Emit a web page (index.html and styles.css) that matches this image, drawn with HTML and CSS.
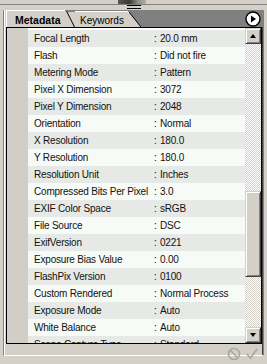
FILE: index.html
```html
<!DOCTYPE html>
<html lang="en">
<head>
    <meta charset="UTF-8">
    <title>Metadata</title>
    <link rel="stylesheet" href="styles.css">
</head>
<body>
    <div class="window">
        <div class="top-strip">
            <div class="top-edge">
                <div class="thumb-peek"></div>
            </div>
            <div class="grip"></div>
        </div>
        <div class="frame">
            <div class="tabs">
                <div class="tab active">Metadata</div>
                <svg class="tab-slant" width="10" height="17" viewBox="0 0 10 17">
                    <rect x="0" y="0" width="10" height="17" fill="#808080"/>
                    <polygon points="0,2 10,2 10,17 0,17" fill="#d4d0c8"/>
                    <polygon points="0,1 2,1 10,17 0,17" fill="#d4d0c8"/>
                    <line x1="1.5" y1="1" x2="9.5" y2="17" stroke="#000" stroke-width="1"/>
                </svg>
                <div class="tab">Keywords</div>
                <svg class="tab-slant" width="13" height="17" viewBox="0 0 13 17">
                    <rect x="0" y="0" width="13" height="17" fill="#808080"/>
                    <polygon points="0,2 1,2 13,17 0,17" fill="#d4d0c8"/>
                    <line x1="1" y1="2" x2="13" y2="17" stroke="#000" stroke-width="1"/>
                    <line x1="0" y1="2.5" x2="1" y2="2.5" stroke="#fff" stroke-width="1"/>
                </svg>
                <div class="tab-fill"></div>
                <svg class="menu-btn" width="16" height="16" viewBox="0 0 16 16">
                    <circle cx="8" cy="8" r="7" fill="#fff" stroke="#000" stroke-width="1.4"/>
                    <polygon points="6,4.5 11,8 6,11.5" fill="#000"/>
                </svg>
            </div>
            <div class="content">
                <div class="gutter"></div>
                <div class="rows">
                    <div class="row"><span class="label">Focal Length</span><span class="colon">:</span><span>20.0 mm</span></div>
                    <div class="row"><span class="label">Flash</span><span class="colon">:</span><span>Did not fire</span></div>
                    <div class="row"><span class="label">Metering Mode</span><span class="colon">:</span><span>Pattern</span></div>
                    <div class="row"><span class="label">Pixel X Dimension</span><span class="colon">:</span><span>3072</span></div>
                    <div class="row"><span class="label">Pixel Y Dimension</span><span class="colon">:</span><span>2048</span></div>
                    <div class="row"><span class="label">Orientation</span><span class="colon">:</span><span>Normal</span></div>
                    <div class="row"><span class="label">X Resolution</span><span class="colon">:</span><span>180.0</span></div>
                    <div class="row"><span class="label">Y Resolution</span><span class="colon">:</span><span>180.0</span></div>
                    <div class="row"><span class="label">Resolution Unit</span><span class="colon">:</span><span>Inches</span></div>
                    <div class="row"><span class="label">Compressed Bits Per Pixel</span><span class="colon">:</span><span>3.0</span></div>
                    <div class="row"><span class="label">EXIF Color Space</span><span class="colon">:</span><span>sRGB</span></div>
                    <div class="row"><span class="label">File Source</span><span class="colon">:</span><span>DSC</span></div>
                    <div class="row"><span class="label">ExifVersion</span><span class="colon">:</span><span>0221</span></div>
                    <div class="row"><span class="label">Exposure Bias Value</span><span class="colon">:</span><span>0.00</span></div>
                    <div class="row"><span class="label">FlashPix Version</span><span class="colon">:</span><span>0100</span></div>
                    <div class="row"><span class="label">Custom Rendered</span><span class="colon">:</span><span>Normal Process</span></div>
                    <div class="row"><span class="label">Exposure Mode</span><span class="colon">:</span><span>Auto</span></div>
                    <div class="row"><span class="label">White Balance</span><span class="colon">:</span><span>Auto</span></div>
                    <div class="row"><span class="label">Scene Capture Type</span><span class="colon">:</span><span>Standard</span></div>
                </div>
                <div class="scrollbar">
                    <div class="sb-btn"><span class="arrow up"></span></div>
                    <div class="sb-track">
                        <div class="sb-space top"></div>
                        <div class="sb-thumb"></div>
                        <div class="sb-space"></div>
                    </div>
                    <div class="sb-btn"><span class="arrow down"></span></div>
                </div>
            </div>
            <div class="footer">
                <svg width="14" height="14" viewBox="0 0 14 14">
                    <circle cx="7" cy="7" r="5.5" fill="none" stroke="#a8a8a8" stroke-width="1.6"/>
                    <line x1="3.2" y1="3.2" x2="10.8" y2="10.8" stroke="#a8a8a8" stroke-width="1.6"/>
                </svg>
                <svg width="14" height="14" viewBox="0 0 14 14">
                    <polyline points="2,7 5.5,11 12,2" fill="none" stroke="#a8a8a8" stroke-width="1.8"/>
                </svg>
            </div>
        </div>
    </div>
</body>
</html>
```

FILE: styles.css
```css
* {
    box-sizing: border-box;
}
body {
    margin: 0;
    background: #d4d0c8;
    font-family: "Liberation Sans", Arial, sans-serif;
    font-size: 10px;
    color: #000;
}

.window {
    width: 267px;
    height: 364px;
    background: #d4d0c8;
    overflow: hidden;
}

.top-strip {
    height: 10px;
}
.top-edge {
    height: 5px;
    border-bottom: 1px solid #808080;
    position: relative;
}
.thumb-peek {
    position: absolute;
    left: 118px;
    top: 0;
    width: 28px;
    height: 4px;
    background: linear-gradient(90deg, #5a5550, #3a3835 40%, #8c8a84 70%, #b0aea8);
}
.grip {
    margin: 0 auto;
    width: 14px;
    height: 4px;
    border-top: 1px solid #000;
    border-bottom: 1px solid #000;
}

.frame {
    margin: 0 3px;
    height: 346px;
    border-left: 1px solid #808080;
    border-right: 1px solid #808080;
    border-bottom: 1px solid #fff;
    box-shadow: inset 1px 0 0 #fff, inset -1px 0 0 #404040;
    padding: 0 2px;
    display: flex;
    flex-direction: column;
}

.tabs {
    height: 17px;
    display: flex;
    align-items: stretch;
    background: #808080;
    margin-right: -2px;
}
.tab {
    background: #d4d0c8;
    padding: 3px 0 0 9px;
    width: 59px;
    border-top: 1px solid #fff;
    margin-top: 1px;
    box-shadow: inset 1px 0 0 #fff;
    white-space: nowrap;
}
.tab.active {
    font-weight: bold;
    font-size: 10.5px;
    margin-top: 0;
}
.tab + .tab-slant + .tab {
    padding-left: 5px;
    width: 53px;
    box-shadow: none;
}
.tab-slant {
    display: block;
}
.tab-fill {
    flex: 1;
}
.menu-btn {
    margin: 1px 2px 0 0;
}

.content {
    height: 317px;
    display: flex;
    border: 1px solid #000;
    margin-right: -1px;
    background: #fff;
}
.gutter {
    width: 21px;
    background: #d0cec6;
}
.rows {
    flex: 1;
    padding-top: 2px;
    overflow: hidden;
}
.row {
    height: 17px;
    line-height: 17px;
    padding-left: 6px;
    display: flex;
    background: #f7fbf7;
    white-space: nowrap;
    letter-spacing: -0.2px;
    color: #111;
}
.row:nth-child(odd) {
    background: #e6e9e6;
}
.label {
    width: 120px;
    flex-shrink: 0;
}
.colon {
    width: 6px;
    flex-shrink: 0;
}

.scrollbar {
    width: 16px;
    display: flex;
    flex-direction: column;
}
.sb-btn {
    height: 16px;
    background: #d4d0c8;
    border-top: 1px solid #d4d0c8;
    border-left: 1px solid #d4d0c8;
    border-right: 1px solid #404040;
    border-bottom: 1px solid #404040;
    box-shadow: inset 1px 1px 0 #fff, inset -1px -1px 0 #808080;
    display: flex;
    align-items: center;
    justify-content: center;
}
.arrow {
    width: 0;
    height: 0;
    border-left: 3.5px solid transparent;
    border-right: 3.5px solid transparent;
}
.arrow.up {
    border-bottom: 4px solid #000;
}
.arrow.down {
    border-top: 4px solid #000;
}
.sb-track {
    flex: 1;
    display: flex;
    flex-direction: column;
}
.sb-space {
    flex: 1;
    background: repeating-conic-gradient(#fff 0 25%, #d4d0c8 0 50%) 0 0 / 2px 2px;
}
.sb-space.top {
    flex: 0 0 147px;
}
.sb-thumb {
    height: 86px;
    background: #d4d0c8;
    border-top: 1px solid #d4d0c8;
    border-left: 1px solid #d4d0c8;
    border-right: 1px solid #404040;
    border-bottom: 1px solid #404040;
    box-shadow: inset 1px 1px 0 #fff, inset -1px -1px 0 #808080;
}

.footer {
    flex: 1;
    display: flex;
    justify-content: flex-end;
    align-items: center;
    gap: 4px;
    padding: 3px 2px 0 0;
}
```
